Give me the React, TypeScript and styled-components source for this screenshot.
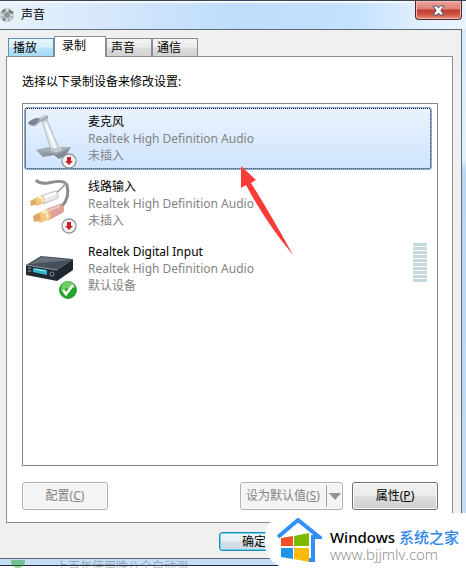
import React from 'react';
import styled, { createGlobalStyle, css } from 'styled-components';

const Global = createGlobalStyle`
  *, *::before, *::after { box-sizing: border-box; }
  body {
    margin: 0;
    background: #fff;
    color: #000;
    font: 12px/16px "Noto Sans", "Noto Sans CJK SC", sans-serif;
  }
  button { font: inherit; }
`;

const Screen = styled.div`
  position: relative;
  display: flex;
  flex-direction: column;
  min-height: 100vh;
  overflow: hidden;
`;

const DialogWindow = styled.section`
  flex: 1;
  display: flex;
  flex-direction: column;
  border-top: 1px solid #3c4352;
  border-bottom: 1px solid #202a3a;
  background: linear-gradient(#d9eafa, #e6f1fb 28%, #b9d6f2 30%, #c5def6);
  padding: 0 4px 6px 0;
  margin-bottom: 2px;
`;

const TitleBar = styled.header`
  display: flex;
  align-items: flex-start;
  height: 28px;
  margin-right: -4px;
  background: linear-gradient(90deg, #e8f2fc, #d8e9fb 20%, #bfdcfb 50%, #c3e0fd 75%, #e4f1fe 92%, #e9f4fe);
  box-shadow: inset 0 2px 1px #f4faff;
`;

const TitleIcon = styled.svg`
  width: 16px;
  height: 16px;
  margin: 6px 5px 0 0;
`;

const Title = styled.h1`
  flex: 1;
  margin: 6px 0 0;
  font-size: 12px;
  line-height: 16px;
  font-weight: 400;
`;

const CloseButton = styled.button`
  display: flex;
  align-items: center;
  justify-content: center;
  width: 47px;
  height: 19px;
  margin-right: 4px;
  padding: 0;
  border: 1px solid #55242a;
  border-top: 0;
  border-radius: 0 0 4px 4px;
  background: linear-gradient(#eba69c, #dc8076 45%, #bf3a2c 50%, #cf5644 75%, #e89078);
  box-shadow: inset 0 0 0 1px #f0b8ae;
`;

const Client = styled.div`
  flex: 1;
  display: flex;
  flex-direction: column;
  padding: 6px 8px 7px 6px;
  border: 1px solid #5b6b78;
  border-left: 0;
  background: #f0f0f0;
`;

const TabStrip = styled.div`
  display: flex;
  align-items: flex-end;
  padding-left: 2px;
`;

const Tab = styled.button<{ $state?: 'hot' | 'selected' }>`
  width: 46px;
  height: 18px;
  padding: 1px 4px 0;
  text-align: left;
  border: 1px solid #898c95;
  border-bottom: 0;
  background: linear-gradient(#f3f3f3, #ebebeb 48%, #dcdcdc 52%, #d2d2d2);
  ${p => p.$state === 'hot' && css`
    border-color: #5b92b8;
    background: linear-gradient(#e8f6fd, #d6effc 48%, #b9e3fa 52%, #a4daf6);
  `}
  ${p => p.$state === 'selected' && css`
    position: relative;
    width: 52px;
    height: 21px;
    margin-bottom: -1px;
    padding: 0 7px 2px;
    background: #fff;
  `}
`;

const Panel = styled.main`
  flex: 1;
  display: flex;
  flex-direction: column;
  padding: 17px 14px 12px 15px;
  border: 1px solid #898c95;
  background: #fff;
`;

const Prompt = styled.p`
  margin: 0 0 13px;
`;

const DeviceList = styled.ul`
  flex: 1;
  margin: 0 0 16px;
  padding: 3px 5px 3px 1px;
  list-style: none;
  border: 1px solid #828790;
`;

const Device = styled.li<{ $selected?: boolean }>`
  display: flex;
  align-items: flex-start;
  height: 63px;
  margin-bottom: 2px;
  padding: 5px 4px 0 3px;
  border: 1px solid transparent;
  border-radius: 3px;
  ${p => p.$selected && css`
    border-color: #84acdd;
    outline: 1px dotted #111;
    outline-offset: -2px;
    background: linear-gradient(#eaf3fe, #cfe4fe);
  `}
`;

const DeviceIcon = styled.div`
  position: relative;
  width: 50px;
  height: 54px;
  margin-right: 10px;
`;

const Art = styled.svg`
  display: block;
  width: 50px;
  height: 50px;
  overflow: visible;
`;

const Badge = styled.svg<{ $large?: boolean }>`
  position: absolute;
  right: 1px;
  bottom: -2px;
  width: ${p => (p.$large ? 18 : 16)}px;
  height: ${p => (p.$large ? 18 : 16)}px;
`;

const DeviceText = styled.div`
  flex: 1;
  font-size: 12px;
  line-height: 17px;
  color: #838383;
`;

const DeviceName = styled.div`
  color: #000;
`;

const Meter = styled.div`
  width: 14px;
  height: 39px;
  background: repeating-linear-gradient(#c3d9de 0 3px, #fff 3px 4px);
`;

const Actions = styled.div`
  display: flex;
  gap: 9px;
`;

const Button = styled.button<{ $push?: boolean }>`
  width: 86px;
  height: 28px;
  padding: 0;
  margin-right: ${p => (p.$push ? 'auto' : 0)};
  border: 1px solid #707070;
  border-radius: 3px;
  background: linear-gradient(#f2f2f2, #ebebeb 48%, #dddddd 52%, #cfcfcf);
  box-shadow: inset 0 0 0 1px #fbfbfb;
  color: #000;
  &:disabled {
    border-color: #adb2b5;
    background: #f4f4f4;
    color: #838383;
  }
`;

const SplitButton = styled(Button)`
  display: flex;
  align-items: center;
  width: 103px;
  padding: 0 0 0 5px;
`;

const SplitArrow = styled.span`
  display: flex;
  align-items: center;
  justify-content: center;
  width: 16px;
  height: 22px;
  margin-left: auto;
  border-left: 1px solid #a5a5a5;
`;

const Footer = styled.footer`
  display: flex;
  padding: 9px 0 0 213px;
`;

const OkButton = styled(Button)`
  height: 19px;
  line-height: 16px;
  padding-right: 16px;
  border-color: #2a86b4;
  background: linear-gradient(#f0f6f9, #e6eff4 48%, #d5dfe5 52%, #cbd9e1);
  box-shadow: inset 0 0 0 1px #5fd4f7;
`;

const Backdrop = styled.div`
  position: absolute;
  left: 0;
  bottom: 0;
  display: flex;
  gap: 31px;
  height: 8px;
  padding-left: 11px;
  overflow: hidden;
  color: #5f6b78;
  opacity: 0.45;
  line-height: 14px;
`;

const BackdropDot = styled.span`
  width: 14px;
  height: 8px;
  border-radius: 0 0 7px 7px;
  background: #139a24;
`;

const Pointer = styled.svg`
  position: absolute;
  left: 240px;
  top: 165px;
  width: 54px;
  height: 90px;
  pointer-events: none;
`;

const Watermark = styled.aside`
  position: absolute;
  right: 0;
  bottom: 0;
  display: flex;
  align-items: flex-start;
  width: 201px;
  height: 55px;
  padding: 5px 0 0 12px;
  border-radius: 24px 0 0 24px;
  background: #fff;
`;

const Logo = styled.svg`
  width: 45px;
  height: 46px;
  margin-right: 8px;
`;

const SiteText = styled.div`
  padding-top: 10px;
  font-size: 15px;
  white-space: nowrap;
`;

const SiteName = styled.div`
  line-height: 18px;
  font-weight: 500;
`;

const Blue = styled.span`
  color: #2e86ea;
`;

const SiteUrl = styled.div`
  line-height: 16px;
  font-family: "Open Sans", "Noto Sans", sans-serif;
  font-weight: 300;
  color: #888;
`;

const Microphone = () => (
  <Art viewBox="0 0 50 50" aria-hidden="true">
    <defs>
      <linearGradient id="steel" x2="1" y2="1">
        <stop stopColor="#a9b0b8" /><stop offset="1" stopColor="#6f7882" />
      </linearGradient>
    </defs>
    <path d="M8 37 22 34 43 34 38 42 31 46 26 42 15 44Z" fill="url(#steel)" />
    <path d="m8 37 14-3 21 0-14 7Z" fill="#a5adb6" />
    <ellipse cx="28" cy="36" rx="6" ry="3" fill="#c6ccd2" />
    <path d="m14 8 9 28h8L19 7Z" fill="#dfe7ee" stroke="#b0bac3" strokeWidth="1" />
    <path d="m18 11 9 24" stroke="#fff" strokeWidth="2" />
    <path d="M0 10Q4 5 11 5L18 2q3 1 2 4l-8 3Q5 17 0 10Z" fill="#a4acb5" />
    <path d="M0 10Q4 5 11 5q0 4-5 7-4 1-6-2Z" fill="#7d8690" />
    <path d="m12 6 6-3" stroke="#d8dde2" strokeWidth="1" />
  </Art>
);

const Cables = () => (
  <Art viewBox="0 0 50 50" aria-hidden="true">
    <path d="M8 2q3 4 12 3 16-4 19 2 3 13-5 21" fill="none" stroke="#8c8c8c" strokeWidth="3" />
    <path d="M27 15q5-2 11-10" fill="none" stroke="#a4a4a4" strokeWidth="2" />
    <path d="m13 18 14-5q4 2 3 7l-15 6Z" fill="#e7e8ea" stroke="#c2c4c7" />
    <path d="m15 20 13-5" stroke="#fff" strokeWidth="2" />
    <path d="m5 21 9-4q4 3 2 8L9 28q-5-2-4-7Z" fill="#f3c583" />
    <path d="m2 23 5-2 2 5-6 2Z" fill="#e0aa67" />
    <path d="m10 20 3-1 2 5" fill="none" stroke="#fff0c6" strokeWidth="2" />
    <path d="m17 32 16-6q4 3 2 8l-15 8Z" fill="#e2a299" stroke="#d29a91" />
    <path d="m19 33 13-5" stroke="#f2cdc5" strokeWidth="2" />
    <path d="m8 36 11-5q5 4 3 10l-10 4q-6-3-4-9Z" fill="#f1c681" />
    <path d="m5 38 6-3 2 7-7 2Z" fill="#dda863" />
    <path d="m14 35 4-2 2 7" fill="none" stroke="#fff0c6" strokeWidth="2" />
  </Art>
);

const Receiver = () => (
  <Art viewBox="0 0 50 50" aria-hidden="true">
    <path d="M-2 22 13 13 45 16 29 27Z" fill="#46505b" />
    <path d="m2 21 12-7 29 3Z" fill="#66717c" />
    <path d="m29 27 16-11v11L29 38Z" fill="#20262f" />
    <path d="m-2 22 31 5v11L-2 32Z" fill="#202a35" />
    <path d="m-2 22 31 5" stroke="#8995a1" />
    <path d="m5 25 14 2v5L5 29Z" fill="#32b9c9" />
    <path d="m7 26 10 2" stroke="#9ff0f4" />
    <circle cx="24" cy="31" r="2" fill="#101820" stroke="#8995a1" />
    <path d="M0 25h3m-3 3h3" stroke="#9ba5af" />
  </Art>
);

const UnpluggedBadge = () => (
  <Badge viewBox="0 0 16 16" role="img" aria-label="未插入">
    <circle cx="8" cy="8" r="7" fill="#f4f4f4" stroke="#92979a" strokeWidth="1.3" />
    <path d="M6 4h4v4h2l-4 4-4-4h2Z" fill="#c9202a" />
  </Badge>
);

const DefaultBadge = () => (
  <Badge $large viewBox="0 0 18 18" role="img" aria-label="默认设备">
    <circle cx="9" cy="9" r="8.4" fill="#22a52b" stroke="#238b2c" />
    <path d="M2 7a7 7 0 0 1 14 0q-7-1-14 3Z" fill="#6ace61" />
    <path d="m4 9 3 4 7-9" fill="none" stroke="#fff" strokeWidth="2.6" />
  </Badge>
);

const devices = [
  { name: '麦克风', status: '未插入', icon: <Microphone />, badge: <UnpluggedBadge />, selected: true },
  { name: '线路输入', status: '未插入', icon: <Cables />, badge: <UnpluggedBadge /> },
  { name: 'Realtek Digital Input', status: '默认设备', icon: <Receiver />, badge: <DefaultBadge />, meter: true },
];

export default function App() {
  return (
    <Screen>
      <Global />
      <DialogWindow>
        <TitleBar>
          <TitleIcon viewBox="0 0 16 16" aria-hidden="true">
            <circle cx="7" cy="8" r="7" fill="#b4b9bb" />
            <path d="M7 1v14M0 8h14M2 3l10 10M12 3 2 13" stroke="#eef0f1" strokeWidth="1" />
            <circle cx="7" cy="8" r="3" fill="#8f9699" />
            <path d="m9 4 4 2M2 5l3-2M3 12l2 1" stroke="#666e72" strokeWidth="2" />
          </TitleIcon>
          <Title>声音</Title>
          <CloseButton aria-label="关闭">
            <svg width="13" height="11" viewBox="0 0 13 11">
              <path d="M1 1h4l1.5 2L8 1h4L8.800 5.500 12 10H8L6.500 8 5 10H1l3.200-4.500Z" fill="#fff" stroke="#535666" />
            </svg>
          </CloseButton>
        </TitleBar>
        <Client>
          <TabStrip role="tablist">
            <Tab role="tab" $state="hot">播放</Tab>
            <Tab role="tab" $state="selected" aria-selected="true">录制</Tab>
            <Tab role="tab">声音</Tab>
            <Tab role="tab">通信</Tab>
          </TabStrip>
          <Panel>
            <Prompt>选择以下录制设备来修改设置:</Prompt>
            <DeviceList>
              {devices.map(d => (
                <Device key={d.name} $selected={d.selected}>
                  <DeviceIcon>{d.icon}{d.badge}</DeviceIcon>
                  <DeviceText>
                    <DeviceName>{d.name}</DeviceName>
                    <div>Realtek High Definition Audio</div>
                    <div>{d.status}</div>
                  </DeviceText>
                  {d.meter && <Meter role="meter" aria-label="音量" aria-valuenow={0} />}
                </Device>
              ))}
            </DeviceList>
            <Actions>
              <Button disabled $push>配置(<u>C</u>)</Button>
              <SplitButton disabled>
                设为默认值(<u>S</u>)
                <SplitArrow>
                  <svg width="12" height="7" viewBox="0 0 12 7"><path d="M0 0h12L6 7Z" fill="#929292" /></svg>
                </SplitArrow>
              </SplitButton>
              <Button>属性(<u>P</u>)</Button>
            </Actions>
          </Panel>
          <Footer>
            <OkButton>确定</OkButton>
          </Footer>
        </Client>
      </DialogWindow>
      <Backdrop aria-hidden="true">
        <BackdropDot />
        <span>上百年使用晚八全自动测</span>
      </Backdrop>
      <Pointer viewBox="0 0 54 90" aria-hidden="true">
        <path d="M1 1 16 15 11 18Q30 48 53 90 25 56 6 20L1 23Z" fill="#fb3b38" />
      </Pointer>
      <Watermark>
        <Logo viewBox="0 0 45 46" aria-hidden="true">
          <path d="M1 19 21 2 42 19H36V42H31" fill="none" stroke="#3290f5" strokeWidth="4" />
          <path d="m4 20 12-2v10H4Z" fill="#f05023" />
          <path d="m17 18 15-3v13H17Z" fill="#7db900" />
          <path d="M4 30h12v11L4 39Z" fill="#1d96e8" />
          <path d="M17 30h15v14l-15-3Z" fill="#fdba07" />
        </Logo>
        <SiteText>
          <SiteName>Windows <Blue>系统之家</Blue></SiteName>
          <SiteUrl>www.bjjmlv.com</SiteUrl>
        </SiteText>
      </Watermark>
    </Screen>
  );
}
